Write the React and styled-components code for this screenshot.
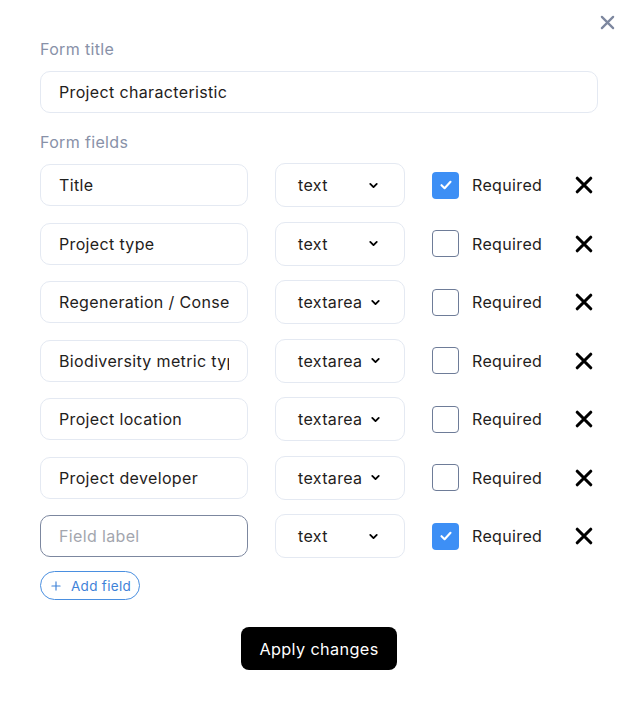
import React from 'react';
import styled, { createGlobalStyle } from 'styled-components';
import { ChevronDown, Plus } from 'lucide-react';

const GlobalStyle = createGlobalStyle`
  body {
    margin: 0;
    background: #ffffff;
    font-family: 'Inter', 'Noto Sans', sans-serif;
    letter-spacing: 0.35px;
    color: #1f2120;
  }
  * { box-sizing: border-box; }
`;

const Modal = styled.div`
  position: relative;
  width: 635px;
  padding: 38px 37px 36px 40px;
  display: flex;
  flex-direction: column;
`;

const CloseButton = styled.button`
  position: absolute;
  top: 14px;
  right: 20px;
  width: 16px;
  height: 16px;
  padding: 0;
  border: none;
  background: none;
  display: flex;
  align-items: center;
  justify-content: center;
  cursor: pointer;
`;

const SectionLabel = styled.div`
  font-size: 16px;
  line-height: 22px;
  color: #8891a8;
  margin-bottom: ${(p) => p.$gap}px;
`;

const TextInput = styled.input`
  width: 100%;
  height: 42px;
  border: 1px solid ${(p) => (p.$focused ? '#7c879f' : '#e4e9f2')};
  border-radius: 10px;
  padding: 0 18px;
  font-family: inherit;
  font-size: 16px;
  letter-spacing: 0.35px;
  color: #1f2120;
  background: #fff;
  outline: none;
  &::placeholder {
    color: #a3a6ae;
  }
`;

const TitleBlock = styled.div`
  margin-bottom: 18px;
`;

const Fields = styled.div`
  display: flex;
  flex-direction: column;
  gap: 16.5px;
`;

const Row = styled.div`
  display: grid;
  grid-template-columns: 208px 130px 27px 1fr 30px;
  align-items: center;
  column-gap: 27px;
  height: 42px;
`;

const Select = styled.div`
  height: 44px;
  border: 1px solid #e4e9f2;
  border-radius: 10px;
  display: flex;
  align-items: center;
  justify-content: space-between;
  padding: 0 ${(p) => (p.$wide ? 22 : 24)}px 0 22px;
  font-size: 16px;
  color: #1f2120;
`;

const CheckLabel = styled.label`
  display: contents;
`;

const Box = styled.span`
  width: 27px;
  height: 27px;
  border-radius: 4px;
  display: flex;
  align-items: center;
  justify-content: center;
  background: ${(p) => (p.$checked ? '#3d8ff5' : '#fff')};
  border: ${(p) => (p.$checked ? 'none' : '1.5px solid #6e7c98')};
`;

const RequiredText = styled.span`
  font-size: 16px;
  color: #1f2120;
  margin-left: -14px;
`;

const RemoveButton = styled.button`
  border: none;
  background: none;
  padding: 0;
  display: flex;
  align-items: center;
  justify-content: center;
  cursor: pointer;
`;

const AddButton = styled.button`
  align-self: flex-start;
  margin-top: 15px;
  height: 29px;
  padding: 0 8px 0 8px;
  border: 1px solid #4a8fe0;
  border-radius: 15px;
  background: #fff;
  color: #3f82d8;
  font-family: inherit;
  font-size: 13.5px;
  letter-spacing: 0.3px;
  display: flex;
  align-items: center;
  gap: 8px;
  cursor: pointer;
`;

const ApplyButton = styled.button`
  align-self: center;
  margin-top: 27px;
  height: 43px;
  padding: 0 18px;
  border: none;
  border-radius: 8px;
  background: #000;
  color: #fff;
  font-family: inherit;
  font-size: 16.3px;
  letter-spacing: 0.35px;
  cursor: pointer;
`;

const Cross = ({ color, size, width }) => (
  <svg width={size} height={size} viewBox="0 0 16 16" fill="none">
    <path d="M2 2L14 14M14 2L2 14" stroke={color} strokeWidth={width} strokeLinecap="round" />
  </svg>
);

const fields = [
  { label: 'Title', type: 'text', required: true },
  { label: 'Project type', type: 'text', required: false },
  { label: 'Regeneration / Conservation', type: 'textarea', required: false },
  { label: 'Biodiversity metric type', type: 'textarea', required: false },
  { label: 'Project location', type: 'textarea', required: false },
  { label: 'Project developer', type: 'textarea', required: false },
  { label: '', type: 'text', required: true, focused: true },
];

const App = () => (
  <>
    <GlobalStyle />
    <Modal>
      <CloseButton aria-label="Close">
        <Cross color="#7d879f" size={15} width={2.4} />
      </CloseButton>
      <TitleBlock>
        <SectionLabel $gap={11}>Form title</SectionLabel>
        <TextInput defaultValue="Project characteristic" />
      </TitleBlock>
      <SectionLabel $gap={10}>Form fields</SectionLabel>
      <Fields>
        {fields.map((f, i) => (
          <Row key={i}>
            <TextInput
              defaultValue={f.label}
              placeholder="Field label"
              $focused={f.focused}
              autoFocus={f.focused}
            />
            <Select $wide={f.type === 'textarea'}>
              <span>{f.type}</span>
              <ChevronDown size={13} strokeWidth={3.4} color="#000" />
            </Select>
            <CheckLabel>
              <Box $checked={f.required}>
                {f.required && (
                  <svg width="14" height="14" viewBox="0 0 14 14" fill="none">
                    <path d="M2.5 7.2L5.6 10.2L11.5 3.8" stroke="#fff" strokeWidth="2.1" strokeLinecap="round" strokeLinejoin="round" />
                  </svg>
                )}
              </Box>
              <RequiredText>Required</RequiredText>
            </CheckLabel>
            <RemoveButton aria-label="Remove field">
              <Cross color="#000" size={18} width={2.8} />
            </RemoveButton>
          </Row>
        ))}
      </Fields>
      <AddButton>
        <Plus size={14} strokeWidth={2} />
        Add field
      </AddButton>
      <ApplyButton>Apply changes</ApplyButton>
    </Modal>
  </>
);

export default App;
